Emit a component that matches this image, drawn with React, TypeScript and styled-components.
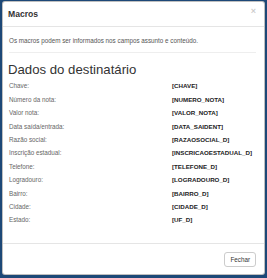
import React from "react";
import styled, { createGlobalStyle } from "styled-components";

const GlobalStyle = createGlobalStyle`
  html, body {
    margin: 0;
    padding: 0;
    background: #1d4877;
  }
  body {
    font-family: "Liberation Sans", Arial, sans-serif;
    color: #333;
  }
`;

// moldura azul em volta do modal
const Backdrop = styled.div`
  padding: 1px 2px 3px 2px;
`;

const Modal = styled.div`
  background: #fff;
  border: 1px solid rgba(0, 0, 0, 0.25);
  border-radius: 3px;
  height: 272px;
  display: flex;
  flex-direction: column;
`;

const Header = styled.div`
  height: 24px;
  display: flex;
  align-items: center;
  justify-content: space-between;
  padding: 0 8px 0 5px;
  border-bottom: 1px solid #e5e5e5;
`;

const Title = styled.h4`
  margin: 0;
  font-size: 8.6px;
  font-weight: bold;
  color: #333;
`;

const Close = styled.button`
  border: none;
  background: transparent;
  padding: 0;
  font-family: "Liberation Sans", Arial, sans-serif;
  font-size: 9px;
  font-weight: bold;
  line-height: 1;
  color: #000;
  opacity: 0.2;
  margin-top: -6px;
  cursor: pointer;
`;

const Body = styled.div`
  flex: 1;
  padding: 9px 8px 0 6px;
`;

const Intro = styled.p`
  margin: 0;
  font-size: 6.3px;
  line-height: 10px;
  color: #555;
`;

const Divider = styled.hr`
  border: none;
  border-top: 1px solid #eee;
  margin: 6px 0 0 0;
`;

const Heading = styled.h3`
  margin: 9px 0 0 -1px;
  font-size: 13.2px;
  line-height: 16px;
  font-weight: normal;
  color: #333;
`;

const MacroList = styled.div`
  display: grid;
  grid-template-columns: 163px 1fr;
  margin-top: 1.3px;
`;

const Label = styled.div`
  font-size: 6.3px;
  line-height: 13.4px;
  color: #666;
`;

const Value = styled.div`
  font-size: 6.2px;
  line-height: 13.4px;
  font-weight: bold;
  color: #222;
`;

const Footer = styled.div`
  display: flex;
  justify-content: flex-end;
  padding: 8px 8px 7px;
  border-top: 1px solid #e5e5e5;
`;

const Button = styled.button`
  height: 15px;
  padding: 0 5px;
  background: #fff;
  border: 1px solid #ccc;
  border-radius: 3px;
  font-family: "Liberation Sans", Arial, sans-serif;
  font-size: 6.3px;
  color: #333;
  cursor: pointer;
`;

const macros = [
  ["Chave:", "[CHAVE]"],
  ["Número da nota:", "[NUMERO_NOTA]"],
  ["Valor nota:", "[VALOR_NOTA]"],
  ["Data saída/entrada:", "[DATA_SAIDENT]"],
  ["Razão social:", "[RAZAOSOCIAL_D]"],
  ["Inscrição estadual:", "[INSCRICAOESTADUAL_D]"],
  ["Telefone:", "[TELEFONE_D]"],
  ["Logradouro:", "[LOGRADOURO_D]"],
  ["Bairro:", "[BAIRRO_D]"],
  ["Cidade:", "[CIDADE_D]"],
  ["Estado:", "[UF_D]"],
];

export default function App() {
  return (
    <>
      <GlobalStyle />
      <Backdrop>
        <Modal>
          <Header>
            <Title>Macros</Title>
            <Close aria-label="Fechar">×</Close>
          </Header>
          <Body>
            <Intro>Os macros podem ser informados nos campos assunto e conteúdo.</Intro>
            <Divider />
            <Heading>Dados do destinatário</Heading>
            <MacroList>
              {macros.map(([label, value]) => (
                <React.Fragment key={value}>
                  <Label>{label}</Label>
                  <Value>{value}</Value>
                </React.Fragment>
              ))}
            </MacroList>
          </Body>
          <Footer>
            <Button>Fechar</Button>
          </Footer>
        </Modal>
      </Backdrop>
    </>
  );
}
